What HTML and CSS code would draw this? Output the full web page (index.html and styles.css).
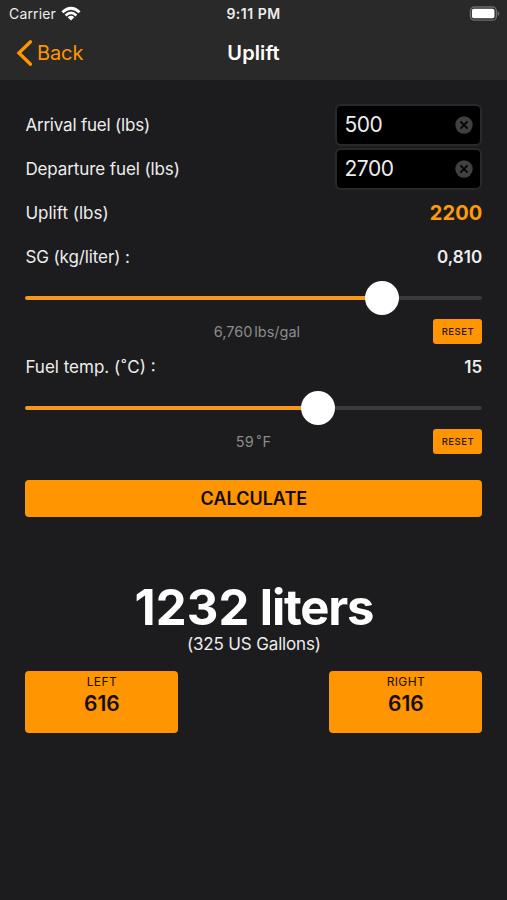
FILE: index.html
```html
<!DOCTYPE html>
<html lang="en">
<head>
<meta charset="utf-8">
<title>Uplift</title>
<link rel="stylesheet" href="styles.css">
</head>
<body>
<header class="header">
  <div class="status">
    <div class="status-left"><span class="carrier">Carrier</span>
      <svg class="wifi" width="20" height="16" viewBox="0 0 20 16"><g fill="none" stroke="#fff" stroke-width="2.7"><path d="M1.4 6.2Q10-1.7 18.6 6.2"/><path d="M4.6 9.4Q10 4.5 15.4 9.4"/></g><path d="M6.7 11.2Q10 8.5 13.3 11.2L10 14.6Z" fill="#fff"/></svg>
    </div>
    <span class="time">9:11 PM</span>
    <svg class="battery" width="31" height="16" viewBox="0 0 31 16"><rect x="1.4" y="1" width="26" height="13.2" rx="4" fill="none" stroke="#6c6c6c" stroke-width="1.3"/><rect x="2.9" y="2.8" width="22.6" height="9.4" rx="2" fill="#fff"/><path d="M28.6 5.3Q30.4 6 30.4 7.6T28.6 9.9Z" fill="#6c6c6c"/></svg>
  </div>
  <nav class="nav">
    <a class="back"><svg width="17" height="28" viewBox="0 0 17 28"><path d="M14.5 2.8 2.9 14 14.5 25.2" fill="none" stroke="#ff9500" stroke-width="3.3" stroke-linecap="round"/></svg><span class="back-text">Back</span></a>
    <h1 class="title">Uplift</h1>
  </nav>
</header>
<main class="main">
  <div class="row"><label class="l-arrival">Arrival fuel (lbs)</label><div class="field"><span>500</span><svg width="18" height="18" viewBox="0 0 18 18"><circle cx="9" cy="9" r="8.7" fill="#404040"/><path d="M5.4 5.4l7.2 7.2M12.6 5.4l-7.2 7.2" stroke="#000" stroke-width="1.7"/></svg></div></div>
  <div class="row"><label class="l-departure">Departure fuel (lbs)</label><div class="field"><span>2700</span><svg width="18" height="18" viewBox="0 0 18 18"><circle cx="9" cy="9" r="8.7" fill="#404040"/><path d="M5.4 5.4l7.2 7.2M12.6 5.4l-7.2 7.2" stroke="#000" stroke-width="1.7"/></svg></div></div>
  <div class="row"><label class="l-uplift">Uplift (lbs)</label><strong class="uplift">2200</strong></div>
  <div class="row"><label class="l-sg">SG (kg/liter) :</label><strong class="value v-sg">0,810</strong></div>
  <div class="slider"><div class="fill" style="width:356.5px"></div><div class="knob"></div><div class="rest"></div></div>
  <div class="info"><span class="hint h-sg">6,760<span class="unit">lbs/gal</span></span><button class="reset">RESET</button></div>
  <div class="row"><label class="l-temp">Fuel temp. (<span class="ring">˚</span>C) :</label><strong class="value v-temp">15</strong></div>
  <div class="slider"><div class="fill" style="width:293px"></div><div class="knob"></div><div class="rest"></div></div>
  <div class="info"><span class="hint h-temp">59<span class="unit"><span class="ring">˚</span>F</span></span><button class="reset">RESET</button></div>
  <button class="calculate">CALCULATE</button>
  <div class="liters"><span class="amount">1232</span> liters</div>
  <div class="gallons">(325 US Gallons)</div>
  <div class="tanks">
    <div class="tank"><span class="side">LEFT</span><strong>616</strong></div>
    <div class="tank"><span class="side">RIGHT</span><strong>616</strong></div>
  </div>
</main>
</body>
</html>
```
FILE: styles.css
```css
* { box-sizing: border-box; }
body { margin: 0; height: 900px; overflow: hidden; background: #1c1c1e; color: #ededed; font-family: Inter, "Liberation Sans", sans-serif; font-size: 17px; white-space: nowrap; }
.header { height: 80px; background: #292929; }
.status { height: 27px; padding: 0 7px 0 9px; display: grid; grid-template-columns: 1fr auto 1fr; align-items: center; font-size: 14px; }
.status-left { display: flex; align-items: center; gap: 5px; }
.carrier { letter-spacing: .15px; }
.time { font-weight: 600; letter-spacing: .5px; margin-right: 2px; }
.battery { justify-self: end; }
.nav { height: 51px; padding: 0 16px; display: grid; grid-template-columns: 1fr auto 1fr; align-items: center; }
.back { display: flex; align-items: center; gap: 4px; color: #ff9500; font-size: 20px; letter-spacing: -.1px; }
.title { margin: 0; font-size: 20px; font-weight: 600; letter-spacing: .1px; color: #fff; }
.main { padding: 23px 24.6px 0 25.4px; }
.row { height: 44px; display: flex; align-items: center; justify-content: space-between; }
.l-arrival { letter-spacing: -.2px; }
.l-departure { letter-spacing: -.1px; }
.l-sg { letter-spacing: -.1px; }
.ring { margin: 0 1px; }
.field { width: 147px; height: 42px; margin-top: -1px; padding: 0 7px; display: flex; align-items: center; justify-content: space-between; background: #000; border: 2px solid #29292b; border-radius: 6px; font-size: 21px; letter-spacing: -.4px; }
.field span { padding-bottom: 1px; }
.uplift { color: #ff9a0d; font-size: 20px; font-weight: 700; letter-spacing: .1px; }
.value { font-weight: 600; letter-spacing: .1px; }
.slider { height: 38px; display: flex; align-items: center; }
.fill { height: 4px; background: #f7981b; border-radius: 2px 0 0 2px; }
.slider .knob { width: 34px; height: 34px; margin: 0 -17px; background: #fff; border-radius: 50%; z-index: 1; }
.rest { flex: 1; height: 4px; background: #3a3a3c; border-radius: 0 2px 2px 0; }
.info { height: 28px; display: grid; grid-template-columns: 49px 1fr 49px; align-items: center; }
.hint { grid-column: 2; text-align: center; color: #8b8b8b; font-size: 14.5px; }
.h-sg { padding-left: 6px; }
.h-temp { padding-right: 1px; letter-spacing: .2px; }
.unit { margin-left: 2px; }
.reset { height: 25px; padding: 0; border: 0; border-radius: 3px; background: #ff9500; color: #2a1900; font: 500 9.5px Inter, sans-serif; letter-spacing: .5px; }
.calculate { display: block; width: 100%; height: 37px; margin-top: 25px; padding: 0; border: 0; border-radius: 4px; background: #ff9500; color: #100a00; font: 600 18px Inter, sans-serif; }
.liters { margin-top: 65px; height: 52px; line-height: 52px; text-align: center; font-size: 49px; font-weight: 700; letter-spacing: -1.2px; color: #fff; }
.amount { letter-spacing: .1px; }
.gallons { height: 20px; line-height: 20px; text-align: center; letter-spacing: -.15px; }
.tanks { margin-top: 17px; display: flex; justify-content: space-between; }
.tank { width: 153px; height: 62px; padding-top: 3px; display: flex; flex-direction: column; align-items: center; background: #ff9500; border-radius: 4px; color: #150c00; }
.side { font-size: 12px; line-height: 16px; letter-spacing: .4px; }
.tank strong { font-size: 21px; line-height: 27px; font-weight: 600; }
```
